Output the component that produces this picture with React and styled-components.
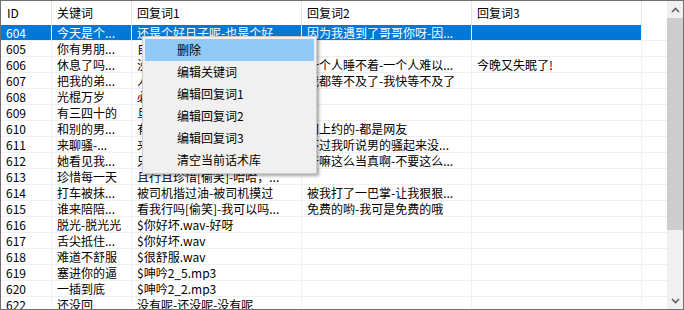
import React from "react";
import styled, { createGlobalStyle } from "styled-components";

const GlobalStyle = createGlobalStyle`
  html, body {
    margin: 0;
    padding: 0;
    background: #ffffff;
  }
  body {
    font-family: "Noto Sans CJK SC", "Noto Sans", sans-serif;
  }
`;

const Window = styled.div`
  position: relative;
  width: 684px;
  height: 310px;
  box-sizing: border-box;
  border: 1px solid #707070;
  background: #ffffff;
  display: flex;
  overflow: hidden;
`;

const Grid = styled.div`
  flex: 1;
  display: flex;
  flex-direction: column;
  overflow: hidden;
`;

const HeaderRow = styled.div`
  display: flex;
  height: 24px;
  flex-shrink: 0;
`;

const HeaderCell = styled.div`
  width: ${(p) => p.$w}px;
  flex-shrink: 0;
  box-sizing: border-box;
  border-right: 1px solid #e5e5e5;
  padding-left: ${(p) => p.$pad}px;
  font-size: 12px;
  line-height: 24px;
  color: #000000;
  white-space: nowrap;
  overflow: hidden;
`;

const Row = styled.div`
  display: flex;
  height: 16px;
  flex-shrink: 0;
  box-sizing: border-box;
  border-bottom: 1px solid #f0f0f0;
`;

const Cell = styled.div`
  width: ${(p) => p.$w}px;
  flex-shrink: 0;
  box-sizing: border-box;
  border-right: 1px solid #f0f0f0;
  padding-left: 5px;
  font-size: 12px;
  line-height: 15px;
  white-space: nowrap;
  overflow: hidden;
  background: ${(p) => (p.$sel ? "#0078d7" : "transparent")};
  color: ${(p) => (p.$sel ? "#ffffff" : "#000000")};
`;

const Filler = styled.div`
  flex: 1;
`;

const ScrollBar = styled.div`
  width: 16px;
  flex-shrink: 0;
  background: #f0f0f0;
  display: flex;
  flex-direction: column;
`;

const ArrowBtn = styled.div`
  height: 17px;
  display: flex;
  align-items: center;
  justify-content: center;
  flex-shrink: 0;
`;

const Thumb = styled.div`
  height: 212px;
  background: #cdcdcd;
  flex-shrink: 0;
`;

const Track = styled.div`
  flex: 1;
`;

const Menu = styled.div`
  position: absolute;
  left: 141px;
  top: 35px;
  width: 175px;
  box-sizing: border-box;
  background: #f0f0f0;
  border: 1px solid #cccccc;
  padding: 2px;
  box-shadow: 2px 2px 3px rgba(0, 0, 0, 0.35);
`;

const MenuItem = styled.div`
  height: 22px;
  padding-left: 32px;
  font-size: 12px;
  line-height: 22px;
  color: #000000;
  background: ${(p) => (p.$hot ? "#91c9f7" : "transparent")};
`;

const widths = [51, 80, 170, 170, 170];

const headers = ["ID", "关键词", "回复词1", "回复词2", "回复词3"];

const rows = [
  ["604", "今天是个...", "还是个好日子呢-也是个好", "因为我遇到了哥哥你呀-因...", ""],
  ["605", "你有男朋...", "自己猜猜看呀", "", ""],
  ["606", "休息了吗...", "没有呢-睡不着", "一个人睡不着-一个人难以...", "今晚又失眠了!"],
  ["607", "把我的弟...", "人家好害羞", "我都等不及了-我快等不及了", ""],
  ["608", "光棍万岁", "必须的呀", "", ""],
  ["609", "有三四十的", "旦有呢", "", ""],
  ["610", "和别的男...", "有啊-都是", "网上约的-都是网友", ""],
  ["611", "来聊骚-...", "来就来呀", "不过我听说男的骚起来没...", ""],
  ["612", "她看见我...", "只是开玩笑", "干嘛这么当真啊-不要这么...", ""],
  ["613", "珍惜每一天", "且行且珍惜[偷笑]-哈哈，...", "", ""],
  ["614", "打车被抹...", "被司机揩过油-被司机摸过", "被我打了一巴掌-让我狠狠...", ""],
  ["615", "谁来陪陪...", "看我行吗[偷笑]-我可以吗...", "免费的哟-我可是免费的哦", ""],
  ["616", "脱光-脱光光", "$你好坏.wav-好呀", "", ""],
  ["617", "舌尖抵住...", "$你好坏.wav", "", ""],
  ["618", "难道不舒服", "$很舒服.wav", "", ""],
  ["619", "塞进你的逼", "$呻吟2_5.mp3", "", ""],
  ["620", "一插到底", "$呻吟2_2.mp3", "", ""],
  ["622", "还没回", "没有呢-还没呢-没有呢", "", ""],
];

const menuItems = ["删除", "编辑关键词", "编辑回复词1", "编辑回复词2", "编辑回复词3", "清空当前话术库"];

function Chevron({ up }) {
  return (
    <svg width="9" height="6" viewBox="0 0 9 6">
      <path
        d={up ? "M1 5 L4.5 1.5 L8 5" : "M1 1 L4.5 4.5 L8 1"}
        fill="none"
        stroke="#606060"
        strokeWidth="1.6"
      />
    </svg>
  );
}

export default function App() {
  return (
    <>
      <GlobalStyle />
      <Window>
        <Grid>
          <HeaderRow>
            {headers.map((h, i) => (
              <HeaderCell key={h} $w={widths[i]} $pad={i === 0 ? 6 : 5}>
                {h}
              </HeaderCell>
            ))}
            <Filler />
          </HeaderRow>
          {rows.map((r, ri) => (
            <Row key={r[0]}>
              {r.map((c, ci) => (
                <Cell key={ci} $w={widths[ci]} $sel={ri === 0}>
                  {c}
                </Cell>
              ))}
              <Filler />
            </Row>
          ))}
        </Grid>
        <ScrollBar>
          <ArrowBtn>
            <Chevron up />
          </ArrowBtn>
          <Thumb />
          <Track />
          <ArrowBtn>
            <Chevron />
          </ArrowBtn>
        </ScrollBar>
        <Menu>
          {menuItems.map((m, i) => (
            <MenuItem key={m} $hot={i === 0}>
              {m}
            </MenuItem>
          ))}
        </Menu>
      </Window>
    </>
  );
}
